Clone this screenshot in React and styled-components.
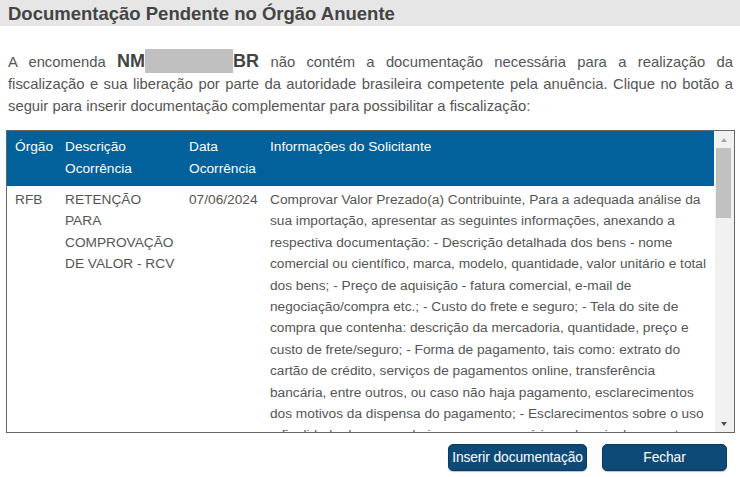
import React from "react"
import styled, { createGlobalStyle } from "styled-components"

const GlobalStyle = createGlobalStyle`
    body {
        margin: 0;
        background: #ffffff;
        font-family: "Liberation Sans", Arial, sans-serif;
    }
`

const Page = styled.div`
    width: 740px;
    height: 477px;
    overflow: hidden;
    color: #555555;
`

const TitleBar = styled.h1`
    margin: 0;
    height: 26px;
    padding-left: 8px;
    background: #e6e6e6;
    color: #444444;
    font-size: 18.5px;
    font-weight: bold;
    line-height: 27px;
`

const Intro = styled.p`
    margin: 23px 7px 0 8px;
    font-size: 14.8px;
    line-height: 22px;
    text-align: justify;
`

const Code = styled.strong`
    font-size: 18px;
    color: #444444;
`

const Redacted = styled.span`
    display: inline-block;
    width: 88px;
    height: 24px;
    vertical-align: -6px;
    background: #c0c0c0;
`

const TableBox = styled.div`
    display: flex;
    height: 301px;
    margin: 13px 5px 0 6px;
    border: 1px solid #666666;
    overflow: hidden;
`

const ScrollArea = styled.div`
    flex: 1;
    overflow: hidden;
`

const Table = styled.table`
    width: 100%;
    border-collapse: collapse;
    table-layout: fixed;
    font-size: 13.7px;
`

const HeadCell = styled.th`
    padding: 5px ${(p) => p.$right || 0}px 6px 8px;
    background: #02609a;
    color: #ffffff;
    font-weight: normal;
    line-height: 22px;
    text-align: left;
    vertical-align: top;
`

const Cell = styled.td`
    padding: 3px ${(p) => p.$right || 0}px 0 8px;
    color: #555555;
    line-height: 21.4px;
    vertical-align: top;
`

const Scrollbar = styled.div`
    display: flex;
    flex-direction: column;
    width: 17px;
    padding-right: 2px;
    background: #f1f1f1;
    border-left: 1px solid #ffffff;
`

const ScrollButton = styled.div`
    display: flex;
    align-items: center;
    justify-content: center;
    height: 17px;
`

const Arrow = styled.span`
    width: 0;
    height: 0;
    border-left: 3.5px solid transparent;
    border-right: 3.5px solid transparent;
    ${(p) =>
        p.$down
            ? "border-top: 4px solid #505050;"
            : "border-bottom: 4px solid #a3a3a3;"}
`

const Track = styled.div`
    flex: 1;
    padding: 0 1px;
`

const Thumb = styled.div`
    height: 70px;
    background: #c1c1c1;
`

const Actions = styled.div`
    display: flex;
    justify-content: flex-end;
    gap: 15px;
    margin: 11px 13px 0 0;
`

const Button = styled.button`
    width: ${(p) => p.$width}px;
    height: 27px;
    padding: 0;
    border: 1px solid #0a3a60;
    border-radius: 5px;
    background: #0e4a78;
    color: #ffffff;
    font-family: "Liberation Sans", Arial, sans-serif;
    font-size: 13.8px;
    letter-spacing: -0.1px;
    white-space: nowrap;
    box-shadow: 0 1px 1px rgba(0, 0, 0, 0.25);
`

const info =
    "Comprovar Valor Prezado(a) Contribuinte, Para a adequada análise da sua importação, apresentar as seguintes informações, anexando a respectiva documentação: - Descrição detalhada dos bens - nome comercial ou científico, marca, modelo, quantidade, valor unitário e total dos bens; - Preço de aquisição - fatura comercial, e-mail de negociação/compra etc.; - Custo do frete e seguro; - Tela do site de compra que contenha: descrição da mercadoria, quantidade, preço e custo de frete/seguro; - Forma de pagamento, tais como: extrato do cartão de crédito, serviços de pagamentos online, transferência bancária, entre outros, ou caso não haja pagamento, esclarecimentos dos motivos da dispensa do pagamento; - Esclarecimentos sobre o uso e finalidade das mercadorias, caso necessário, e demais documentos que julgar pertinentes."

const App = () => {
    return (
        <Page>
            <GlobalStyle />
            <TitleBar>Documentação Pendente no Órgão Anuente</TitleBar>
            <Intro>
                A encomenda <Code>NM</Code>
                <Redacted />
                <Code>BR</Code> não contém a documentação necessária para a
                realização da fiscalização e sua liberação por parte da
                autoridade brasileira competente pela anuência. Clique no botão
                a seguir para inserir documentação complementar para
                possibilitar a fiscalização:
            </Intro>
            <TableBox>
                <ScrollArea>
                    <Table>
                        <colgroup>
                            <col style={{ width: 50 }} />
                            <col style={{ width: 124 }} />
                            <col style={{ width: 81 }} />
                            <col />
                        </colgroup>
                        <thead>
                            <tr>
                                <HeadCell>Órgão</HeadCell>
                                <HeadCell $right={4}>Descrição Ocorrência</HeadCell>
                                <HeadCell>Data Ocorrência</HeadCell>
                                <HeadCell $right={4}>Informações do Solicitante</HeadCell>
                            </tr>
                        </thead>
                        <tbody>
                            <tr>
                                <Cell>RFB</Cell>
                                <Cell $right={4}>RETENÇÃO PARA COMPROVAÇÃO DE VALOR - RCV</Cell>
                                <Cell>07/06/2024</Cell>
                                <Cell $right={4}>{info}</Cell>
                            </tr>
                        </tbody>
                    </Table>
                </ScrollArea>
                <Scrollbar>
                    <ScrollButton>
                        <Arrow />
                    </ScrollButton>
                    <Track>
                        <Thumb />
                    </Track>
                    <ScrollButton>
                        <Arrow $down />
                    </ScrollButton>
                </Scrollbar>
            </TableBox>
            <Actions>
                <Button $width={139}>Inserir documentação</Button>
                <Button $width={125}>Fechar</Button>
            </Actions>
        </Page>
    )
}

export default App
